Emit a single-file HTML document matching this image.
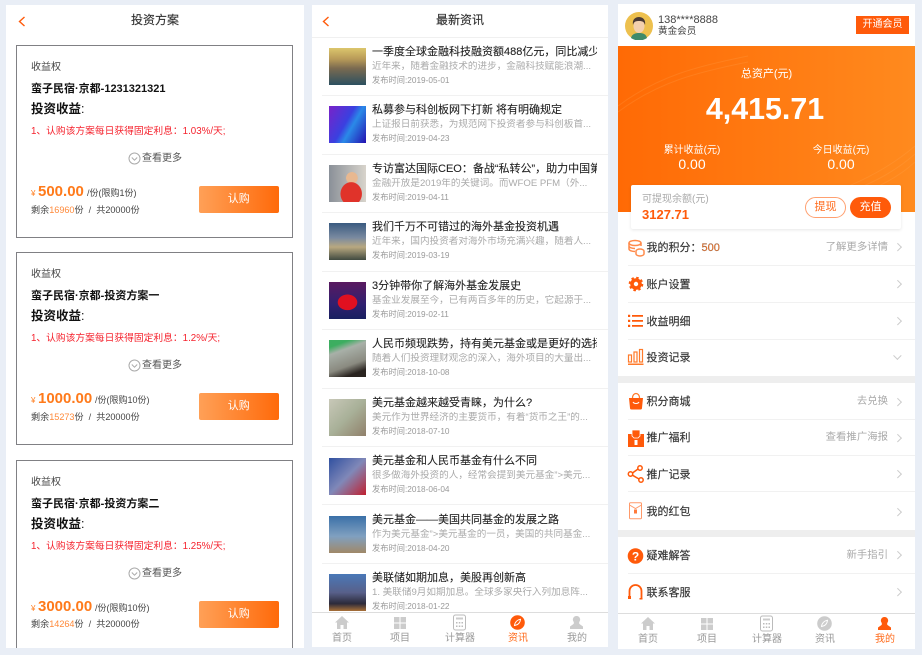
<!DOCTYPE html>
<html><head><meta charset="utf-8"><style>
*{box-sizing:border-box;margin:0;padding:0}
html,body{width:922px;height:655px;overflow:hidden;background:#e9eef6;font-family:"Liberation Sans","Noto Sans CJK SC",sans-serif;color:#222}
.p{position:absolute;top:4.5px;background:#fff;overflow:hidden;filter:blur(.3px)}
.a{position:absolute;white-space:nowrap;line-height:1}
.card{position:absolute;left:10px;width:277px;height:193px;border:1px solid #808084}
.hd{position:absolute;top:0;left:0;width:100%;text-align:center;font-size:12px;line-height:30px;color:#333;-webkit-text-stroke:.15px #333}
.tab{position:absolute;top:0;height:34px;width:60px;text-align:center;font-size:10px;color:#999}
.tab span{position:absolute;left:0;width:60px;top:20px;line-height:11px}
.tabs{position:absolute;left:0;bottom:0;width:100%;background:#fff;border-top:1px solid #ddd}
.btn{position:absolute;left:182px;top:140px;width:79.5px;height:27px;border-radius:2px;background:linear-gradient(90deg,#ffa057,#ff6a0a);color:#fff;font-size:11px;line-height:27px;text-align:center}
.thumb{position:absolute;left:17px;width:37px;height:37px}
.t{position:absolute;left:60px;width:225px;margin-top:.5px;overflow:hidden;white-space:nowrap;font-size:11px;line-height:14px;color:#222;-webkit-text-stroke:.1px #222}
.e{position:absolute;left:60px;width:225px;margin-top:1px;white-space:nowrap;overflow:hidden;font-size:9.6px;line-height:12px;color:#aaa}
.d{position:absolute;left:60px;font-size:8.25px;line-height:10px;color:#999;white-space:nowrap}
.l{position:absolute;left:10px;right:0;height:1px;background:#f1f1f1}
.m{position:absolute;left:28.5px;font-size:11px;line-height:14px;color:#333;white-space:nowrap;-webkit-text-stroke:.15px #333}
.r{position:absolute;right:27px;font-size:10.4px;line-height:14px;color:#aaa;white-space:nowrap}
.ch{position:absolute;left:277px;width:5.5px;height:5.5px;border-top:1px solid #ccc;border-right:1px solid #ccc;transform:rotate(45deg)}
.ic{position:absolute;left:9px;width:18px;height:18px}
.c1{left:14px;top:17px;font-size:10px;color:#444}
.c2{left:14px;top:38px;font-size:11px;font-weight:bold;color:#111}
.c3{left:14px;top:57px;font-size:12.5px;font-weight:bold;color:#111}
.c3 b{font-weight:normal}
.c4{left:14px;top:81px;font-size:9.75px;color:#f5222d}
.c5{left:125px;top:108px;font-size:10px;color:#555}
.c6{left:111px;top:106px}
.c7{left:14px;top:144px;font-size:8px;color:#ff7a1a}
.c8{left:21px;top:138px;font-size:15px;font-weight:bold;color:#ff7a1a}
.c9{top:143px;font-size:9px;color:#444}
.c10{left:14px;top:159.5px;font-size:9.1px;color:#444}
</style></head><body>

<div class="p" style="left:6px;width:298px;height:643px">
<svg class="a" style="left:11px;top:10px" width="10" height="13" viewBox="0 0 10 13"><path d="M7.5 2L2.5 6.5 7.5 11" fill="none" stroke="#ff5a0a" stroke-width="1.4"/></svg>
<div class="hd" style="top:.5px">投资方案</div>

<div class="card" style="top:40.5px">
<div class="a c1">收益权</div>
<div class="a c2">蛮子民宿·京都-1231321321</div>
<div class="a c3">投资收益<b>:</b></div>
<div class="a c4">1、认购该方案每日获得固定利息：1.03%/天;</div>
<svg class="a c6" width="13" height="13" viewBox="0 0 13 13"><circle cx="6.5" cy="6.5" r="5.5" fill="none" stroke="#aaa"/><path d="M3.8 5.5L6.5 8.2 9.2 5.5" fill="none" stroke="#aaa"/></svg>
<div class="a c5">查看更多</div>
<div class="a c7">¥</div>
<div class="a c8">500.00</div>
<div class="a c9" style="left:70px">/份(限购1份)</div>
<div class="a c10">剩余<span style="color:#ff8a3a">16960</span>份 &nbsp;/&nbsp; 共20000份</div>
<div class="btn">认购</div>
</div>

<div class="card" style="top:247.8px">
<div class="a c1">收益权</div>
<div class="a c2">蛮子民宿·京都-投资方案一</div>
<div class="a c3">投资收益<b>:</b></div>
<div class="a c4">1、认购该方案每日获得固定利息：1.2%/天;</div>
<svg class="a c6" width="13" height="13" viewBox="0 0 13 13"><circle cx="6.5" cy="6.5" r="5.5" fill="none" stroke="#aaa"/><path d="M3.8 5.5L6.5 8.2 9.2 5.5" fill="none" stroke="#aaa"/></svg>
<div class="a c5">查看更多</div>
<div class="a c7">¥</div>
<div class="a c8">1000.00</div>
<div class="a c9" style="left:78px">/份(限购10份)</div>
<div class="a c10">剩余<span style="color:#ff8a3a">15273</span>份 &nbsp;/&nbsp; 共20000份</div>
<div class="btn">认购</div>
</div>

<div class="card" style="top:455px;height:200px">
<div class="a c1">收益权</div>
<div class="a c2">蛮子民宿·京都-投资方案二</div>
<div class="a c3">投资收益<b>:</b></div>
<div class="a c4">1、认购该方案每日获得固定利息：1.25%/天;</div>
<svg class="a c6" width="13" height="13" viewBox="0 0 13 13"><circle cx="6.5" cy="6.5" r="5.5" fill="none" stroke="#aaa"/><path d="M3.8 5.5L6.5 8.2 9.2 5.5" fill="none" stroke="#aaa"/></svg>
<div class="a c5">查看更多</div>
<div class="a c7">¥</div>
<div class="a c8">3000.00</div>
<div class="a c9" style="left:78px">/份(限购10份)</div>
<div class="a c10">剩余<span style="color:#ff8a3a">14264</span>份 &nbsp;/&nbsp; 共20000份</div>
<div class="btn">认购</div>
</div>
</div>

<div class="p" style="left:312px;width:296px;height:642px">
<svg class="a" style="left:9px;top:10px" width="10" height="13" viewBox="0 0 10 13"><path d="M7.5 2L2.5 6.5 7.5 11" fill="none" stroke="#ff5a0a" stroke-width="1.4"/></svg>
<div class="hd">最新资讯</div>
<div class="a" style="left:0;top:32px;width:100%;height:1px;background:#f0f0f0"></div>

<div class="thumb" style="top:43px;background:linear-gradient(180deg,#dcc66c 0,#b89a58 30%,#7a6a50 55%,#2c5060 100%)"></div>
<div class="t" style="top:40px">一季度全球金融科技融资额488亿元，同比减少</div>
<div class="e" style="top:55px">近年来，随着金融技术的进步，金融科技赋能浪潮...</div>
<div class="d" style="top:71px">发布时间:2019-05-01</div>
<div class="l" style="top:90px"></div>

<div class="thumb" style="top:101px;background:linear-gradient(120deg,#7a22c8 0,#3a40e0 45%,#2a8ae8 60%,#2410b0 100%)"></div>
<div class="t" style="top:98px">私募参与科创板网下打新 将有明确规定</div>
<div class="e" style="top:113px">上证报日前获悉，为规范网下投资者参与科创板首...</div>
<div class="d" style="top:129px">发布时间:2019-04-23</div>
<div class="l" style="top:149px"></div>

<div class="thumb" style="top:160px;background:radial-gradient(ellipse 11px 12px at 60% 78%,#e0332a 95%,transparent),radial-gradient(circle 6px at 62% 35%,#e8b890 95%,transparent),linear-gradient(90deg,#8a9098,#d8d4cc)"></div>
<div class="t" style="top:157px">专访富达国际CEO：备战“私转公”，助力中国第</div>
<div class="e" style="top:172px">金融开放是2019年的关键词。而WFOE PFM（外...</div>
<div class="d" style="top:188px">发布时间:2019-04-11</div>
<div class="l" style="top:207px"></div>

<div class="thumb" style="top:218px;background:linear-gradient(180deg,#3a5a80 0,#7a8aa0 40%,#b8a880 65%,#404a40 100%)"></div>
<div class="t" style="top:215px">我们千万不可错过的海外基金投资机遇</div>
<div class="e" style="top:230px">近年来，国内投资者对海外市场充满兴趣，随着人...</div>
<div class="d" style="top:246px">发布时间:2019-03-19</div>
<div class="l" style="top:266px"></div>

<div class="thumb" style="top:277px;background:radial-gradient(ellipse 10px 8px at 50% 55%,#e01020 95%,transparent),linear-gradient(180deg,#5a1a60,#302070 60%,#182060)"></div>
<div class="t" style="top:274px">3分钟带你了解海外基金发展史</div>
<div class="e" style="top:289px">基金业发展至今，已有两百多年的历史，它起源于...</div>
<div class="d" style="top:305px">发布时间:2019-02-11</div>
<div class="l" style="top:324px"></div>

<div class="thumb" style="top:335px;background:linear-gradient(160deg,#3cae60 0,#3cae60 15%,#a8b0a8 30%,#8a8a80 65%,#2a2420 85%)"></div>
<div class="t" style="top:332px">人民币频现跌势，持有美元基金或是更好的选择</div>
<div class="e" style="top:347px">随着人们投资理财观念的深入，海外项目的大量出...</div>
<div class="d" style="top:363px">发布时间:2018-10-08</div>
<div class="l" style="top:383px"></div>

<div class="thumb" style="top:394px;background:linear-gradient(135deg,#c8c8b8 0,#a8b098 50%,#90806a 100%)"></div>
<div class="t" style="top:391px">美元基金越来越受青睐，为什么?</div>
<div class="e" style="top:406px">美元作为世界经济的主要货币，有着“货币之王”的...</div>
<div class="d" style="top:422px">发布时间:2018-07-10</div>
<div class="l" style="top:441px"></div>

<div class="thumb" style="top:453px;background:linear-gradient(135deg,#3050a0 0,#8088b8 50%,#c02030 100%)"></div>
<div class="t" style="top:449px">美元基金和人民币基金有什么不同</div>
<div class="e" style="top:464px">很多做海外投资的人，经常会提到美元基金”&gt;美元...</div>
<div class="d" style="top:480px">发布时间:2018-06-04</div>
<div class="l" style="top:499px"></div>

<div class="thumb" style="top:511px;background:linear-gradient(180deg,#3a70a8 0,#80a0c0 55%,#a08868 100%)"></div>
<div class="t" style="top:508px">美元基金——美国共同基金的发展之路</div>
<div class="e" style="top:523px">作为美元基金”&gt;美元基金的一员，美国的共同基金...</div>
<div class="d" style="top:539px">发布时间:2018-04-20</div>
<div class="l" style="top:558px"></div>

<div class="thumb" style="top:569px;background:linear-gradient(180deg,#4a78b8 0,#58608a 50%,#2c2a3a 80%,#a87038 100%)"></div>
<div class="t" style="top:566px">美联储如期加息，美股再创新高</div>
<div class="e" style="top:581px">1. 美联储9月如期加息。全球多家央行入列加息阵...</div>
<div class="d" style="top:597px">发布时间:2018-01-22</div>

<div class="tabs" style="height:35px">
<div class="tab" style="left:0"><svg class="a" style="left:22px;top:2px" width="16" height="15" viewBox="0 0 16 15"><path d="M8 1L1 7.5h2V14h3.5v-4h3v4H13V7.5h2z" fill="#ccc"/></svg><span>首页</span></div>
<div class="tab" style="left:58px"><svg class="a" style="left:23px;top:3px" width="14" height="14" viewBox="0 0 14 14"><path d="M1 1h5.5v5.5H1zM7.5 1H13v5.5H7.5zM1 7.5h5.5V13H1zM7.5 7.5H13V13H7.5z" fill="#ccc"/></svg><span>项目</span></div>
<div class="tab" style="left:118px"><svg class="a" style="left:22px;top:1px" width="15" height="17" viewBox="0 0 15 17"><rect x="1.5" y="1" width="12" height="15" rx="2" fill="none" stroke="#bbb"/><path d="M4 3.5h7v2H4z" fill="#ccc"/><path d="M4 8h1.5v1.5H4zM6.8 8h1.5v1.5H6.8zM9.5 8H11v1.5H9.5zM4 11.5h1.5V13H4zM6.8 11.5h1.5V13H6.8zM9.5 11.5H11V13H9.5z" fill="#bbb"/></svg><span>计算器</span></div>
<div class="tab" style="left:176px"><svg class="a" style="left:22px;top:2px" width="15" height="15" viewBox="0 0 15 15"><circle cx="7.5" cy="7.5" r="7.3" fill="#ff5a0a"/><path d="M4.5 10.5C5 7 7.5 4.8 10.5 4.3 10.3 7.5 8 10 5.5 10.3z" fill="none" stroke="#fff"/></svg><span style="color:#ff6a1a">资讯</span></div>
<div class="tab" style="left:235px"><svg class="a" style="left:22px;top:2px" width="15" height="16" viewBox="0 0 15 16"><path d="M7.5 1a3.5 3.5 0 0 1 3 5.5c-.5 1-.5 2 0 2.5L14 11.5V14H1v-2.5L4.500 9c.5-.5.5-1.500 0-2.500a3.500 3.500 0 0 1 3-5.500z" fill="#ccc"/></svg><span>我的</span></div>
</div>
</div>

<div class="p" style="left:618px;width:297px;height:645px;top:4px">
<svg class="a" style="left:7px;top:8px" width="28" height="28" viewBox="0 0 28 28"><circle cx="14" cy="14" r="14" fill="#edc04e"/><path d="M6 26c1-4 4-5 8-5s7 1 8 5a14 14 0 0 1-16 0z" fill="#3f8a6a"/><ellipse cx="14" cy="14" rx="5.5" ry="7" fill="#f3d0ae"/><path d="M8 13c-1-6 3-8 6-8s7 2 6 8c-1-3-2-4-6-4s-5 1-6 4z" fill="#4a3a34"/></svg>
<div class="a" style="left:40px;top:10.5px;font-size:11px;color:#444">138****8888</div>
<div class="a" style="left:40px;top:22.5px;font-size:9.6px;color:#444">黄金会员</div>
<div class="a" style="left:238px;top:12px;width:53px;height:18px;background:#ff5a0a;color:#fff;font-size:10px;line-height:18px;text-align:center">开通会员</div>

<div class="a" style="left:0;top:42px;width:297px;height:166px;background:linear-gradient(90deg,#ff6a05,#ff8a1e)"></div>
<svg class="a" style="left:0;top:42px" width="297" height="166" viewBox="0 0 297 166"><g fill="none" stroke="#ffb060" stroke-opacity=".2"><path d="M160 166C200 150 250 140 297 100"/><path d="M165 166C205 153 255 145 297 108"/><path d="M170 166C210 156 260 150 297 116"/><path d="M0 60C40 30 80 20 130 10"/><path d="M0 66C40 36 80 26 130 16"/></g></svg>
<div class="a" style="left:0;top:64.5px;width:297px;text-align:center;font-size:11px;color:#fff">总资产(元)</div>
<div class="a" style="left:-1.5px;top:90px;width:297px;text-align:center;font-size:30.4px;font-weight:bold;color:#fff">4,415.71</div>
<div class="a" style="left:14px;top:141.5px;width:120px;text-align:center;font-size:10px;color:#fff">累计收益(元)</div>
<div class="a" style="left:14px;top:153px;width:120px;text-align:center;font-size:14px;color:#fff">0.00</div>
<div class="a" style="left:163px;top:141.5px;width:120px;text-align:center;font-size:10px;color:#fff">今日收益(元)</div>
<div class="a" style="left:163px;top:153px;width:120px;text-align:center;font-size:14px;color:#fff">0.00</div>
<div class="a" style="left:13px;top:181px;width:270px;height:44px;background:#fff;border-radius:2px;box-shadow:0 1px 3px rgba(0,0,0,.1)"></div>
<div class="a" style="left:24px;top:190.5px;font-size:10px;color:#aaa">可提现余额(元)</div>
<div class="a" style="left:24px;top:204px;font-size:13px;font-weight:bold;color:#ff5a0a">3127.71</div>
<div class="a" style="left:187px;top:193px;width:41px;height:21px;border:1px solid #ffa070;border-radius:11px;color:#ff6a1a;font-size:11px;line-height:19px;text-align:center">提现</div>
<div class="a" style="left:232px;top:193px;width:41px;height:21px;background:#ff5a0a;border-radius:11px;color:#fff;font-size:11px;line-height:21px;text-align:center">充值</div>

<svg class="ic" style="top:235px" viewBox="0 0 18 18"><g fill="none" stroke="#ff8a4a" stroke-width="1.5"><ellipse cx="8" cy="4" rx="6" ry="2.5"/><path d="M2 4v6c0 1.5 3 2.5 6 2.5M14 4v3M2 7c0 1.5 3 2.5 6 2.5M9 12c0-1 2-2 4-2s4 1 4 2v3c0 1-2 2-4 2s-4-1-4-2z"/></g></svg>
<div class="m" style="top:237px">我的积分：<span style="color:#ff7a2a">500</span></div>
<div class="r" style="top:237px">了解更多详情</div><i class="ch" style="top:240px"></i>
<div class="l" style="top:261px"></div>

<svg class="ic" style="top:271px" viewBox="0 0 18 18"><circle cx="9" cy="9" r="4" fill="none" stroke="#ff5a0a" stroke-width="3.6"/><circle cx="9" cy="9" r="6.3" fill="none" stroke="#ff5a0a" stroke-width="2" stroke-dasharray="2.5 2.45"/></svg>
<div class="m" style="top:274px">账户设置</div><i class="ch" style="top:277px"></i>
<div class="l" style="top:298px"></div>

<svg class="ic" style="top:308px" viewBox="0 0 18 18"><path d="M1 2.8h2.200V5H1zM1 7.800h2.200V10H1zM1 12.800h2.200V15H1zM5 3h11v1.800H5zM5 8h11v1.800H5zM5 13h11v1.800H5z" fill="#ff5a0a"/></svg>
<div class="m" style="top:311px">收益明细</div><i class="ch" style="top:314px"></i>
<div class="l" style="top:335px"></div>

<svg class="ic" style="top:344px" viewBox="0 0 18 18"><g fill="none" stroke="#ff7a2a" stroke-width="1.2"><rect x="1.5" y="7" width="3" height="7"/><rect x="7" y="4" width="3" height="10"/><rect x="12.5" y="1.5" width="3" height="12.5"/></g><path d="M1 15.5h15.5V17H1z" fill="#ff7a2a"/></svg>
<div class="m" style="top:347px">投资记录</div><i class="ch" style="top:349px;transform:rotate(135deg)"></i>
<div class="a" style="left:0;top:372px;width:297px;height:7px;background:#eee"></div>

<svg class="ic" style="top:388px" viewBox="0 0 18 18"><path d="M2 6h14l-1 10a1.5 1.5 0 0 1-1.5 1.5h-9A1.5 1.5 0 0 1 3 16z" fill="#ff5a0a"/><path d="M5.5 6c0-6 7-6 7 0" fill="none" stroke="#ff7a2a" stroke-width="1.3"/><path d="M6 10c1 2 5 2 6 0" fill="none" stroke="#fff"/></svg>
<div class="m" style="top:391px">积分商城</div><div class="r" style="top:391px">去兑换</div><i class="ch" style="top:395px"></i>
<div class="l" style="top:415px"></div>

<svg class="ic" style="top:425px" viewBox="0 0 18 18"><path d="M1 5h16v13H1z" fill="#ff5a0a"/><path d="M5 1h8v6l-2 2H7L5 7z" fill="#ff5a0a" stroke="#fff" stroke-width=".8"/><path d="M7.5 11h3v5h-3z" fill="#fff"/></svg>
<div class="m" style="top:427px">推广福利</div><div class="r" style="top:427px">查看推广海报</div><i class="ch" style="top:431px"></i>
<div class="l" style="top:451px"></div>

<svg class="ic" style="top:461px" viewBox="0 0 18 18"><g fill="none" stroke="#ff5a0a" stroke-width="1.5"><circle cx="3.5" cy="9" r="2.2"/><circle cx="13" cy="3" r="2.2"/><circle cx="14" cy="15" r="2.2"/><path d="M5.5 8L11 4M5.500 10.200L12 14"/></g></svg>
<div class="m" style="top:464px">推广记录</div><i class="ch" style="top:467px"></i>
<div class="l" style="top:487px"></div>

<svg class="ic" style="top:498px" viewBox="0 0 18 18"><rect x="2.5" y=".8" width="12" height="16" rx="1" fill="none" stroke="#ff9a6a"/><path d="M2.5 3l6 3.5 6-3.5" fill="none" stroke="#ff9a6a"/><rect x="7" y="7.5" width="3" height="4" fill="#ff7a3a"/></svg>
<div class="m" style="top:501px">我的红包</div><i class="ch" style="top:505px"></i>
<div class="a" style="left:0;top:526px;width:297px;height:7px;background:#eee"></div>

<svg class="ic" style="top:543px" viewBox="0 0 18 18"><circle cx="8.5" cy="9" r="7.8" fill="#ff5a0a"/><text x="8.5" y="13.5" font-size="12" font-weight="bold" fill="#fff" text-anchor="middle" font-family="Liberation Sans">?</text></svg>
<div class="m" style="top:545px">疑难解答</div><div class="r" style="top:545px">新手指引</div><i class="ch" style="top:548px"></i>
<div class="l" style="top:569px"></div>

<svg class="ic" style="top:579px" viewBox="0 0 18 18"><path d="M2.5 16V8a6 6 0 0 1 12 0v8" fill="none" stroke="#ff5a0a" stroke-width="1.8"/><path d="M1 13h3v3H1zM12.5 15h3v1.500h-3z" fill="#ff5a0a"/></svg>
<div class="m" style="top:582px">联系客服</div><i class="ch" style="top:585px"></i>

<div class="tabs" style="height:36px">
<div class="tab" style="left:0"><svg class="a" style="left:22px;top:2px" width="16" height="15" viewBox="0 0 16 15"><path d="M8 1L1 7.5h2V14h3.5v-4h3v4H13V7.5h2z" fill="#ccc"/></svg><span>首页</span></div>
<div class="tab" style="left:59px"><svg class="a" style="left:23px;top:3px" width="14" height="14" viewBox="0 0 14 14"><path d="M1 1h5.5v5.5H1zM7.5 1H13v5.5H7.5zM1 7.5h5.5V13H1zM7.5 7.5H13V13H7.5z" fill="#ccc"/></svg><span>项目</span></div>
<div class="tab" style="left:119px"><svg class="a" style="left:22px;top:1px" width="15" height="17" viewBox="0 0 15 17"><rect x="1.5" y="1" width="12" height="15" rx="2" fill="none" stroke="#bbb"/><path d="M4 3.5h7v2H4z" fill="#ccc"/><path d="M4 8h1.5v1.5H4zM6.8 8h1.5v1.5H6.8zM9.5 8H11v1.5H9.5zM4 11.5h1.5V13H4zM6.8 11.5h1.5V13H6.8zM9.5 11.5H11V13H9.5z" fill="#bbb"/></svg><span>计算器</span></div>
<div class="tab" style="left:177px"><svg class="a" style="left:22px;top:2px" width="15" height="15" viewBox="0 0 15 15"><circle cx="7.5" cy="7.5" r="7.3" fill="#ccc"/><path d="M4.5 10.5C5 7 7.5 4.8 10.5 4.3 10.3 7.5 8 10 5.5 10.3z" fill="none" stroke="#fff"/></svg><span>资讯</span></div>
<div class="tab" style="left:237px"><svg class="a" style="left:22px;top:2px" width="15" height="16" viewBox="0 0 15 16"><path d="M7.5 1a3.5 3.5 0 0 1 3 5.5c-.5 1-.5 2 0 2.5L14 11.5V14H1v-2.5L4.5 9c.5-.5.5-1.5 0-2.5a3.5 3.5 0 0 1 3-5.5z" fill="#ff5a0a"/></svg><span style="color:#ff6a1a">我的</span></div>
</div>
</div>
</body></html>
